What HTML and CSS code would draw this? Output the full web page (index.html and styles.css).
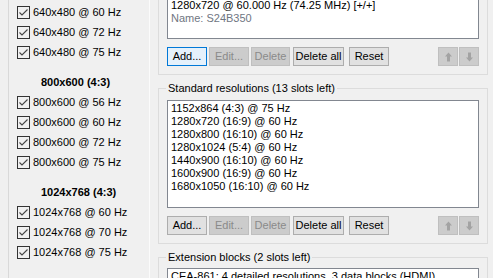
FILE: index.html
```html
<!DOCTYPE html>
<html>
<head>
<meta charset="utf-8">
<link rel="stylesheet" href="styles.css">
</head>
<body>
<div class="app">
  <div class="modes">
    <label class="mode"><span class="cb"><svg viewBox="0 0 11 11" width="11" height="11"><polyline points="1.5,5.5 4,8 9.5,2.5" class="tick"/></svg></span>640x480 @ 60 Hz</label>
    <label class="mode"><span class="cb"><svg viewBox="0 0 11 11" width="11" height="11"><polyline points="1.5,5.5 4,8 9.5,2.5" class="tick"/></svg></span>640x480 @ 72 Hz</label>
    <label class="mode"><span class="cb"><svg viewBox="0 0 11 11" width="11" height="11"><polyline points="1.5,5.5 4,8 9.5,2.5" class="tick"/></svg></span>640x480 @ 75 Hz</label>
    <div class="head">800x600 (4:3)</div>
    <label class="mode"><span class="cb"><svg viewBox="0 0 11 11" width="11" height="11"><polyline points="1.5,5.5 4,8 9.5,2.5" class="tick"/></svg></span>800x600 @ 56 Hz</label>
    <label class="mode"><span class="cb"><svg viewBox="0 0 11 11" width="11" height="11"><polyline points="1.5,5.5 4,8 9.5,2.5" class="tick"/></svg></span>800x600 @ 60 Hz</label>
    <label class="mode"><span class="cb"><svg viewBox="0 0 11 11" width="11" height="11"><polyline points="1.5,5.5 4,8 9.5,2.5" class="tick"/></svg></span>800x600 @ 72 Hz</label>
    <label class="mode"><span class="cb"><svg viewBox="0 0 11 11" width="11" height="11"><polyline points="1.5,5.5 4,8 9.5,2.5" class="tick"/></svg></span>800x600 @ 75 Hz</label>
    <div class="head">1024x768 (4:3)</div>
    <label class="mode"><span class="cb"><svg viewBox="0 0 11 11" width="11" height="11"><polyline points="1.5,5.5 4,8 9.5,2.5" class="tick"/></svg></span>1024x768 @ 60 Hz</label>
    <label class="mode"><span class="cb"><svg viewBox="0 0 11 11" width="11" height="11"><polyline points="1.5,5.5 4,8 9.5,2.5" class="tick"/></svg></span>1024x768 @ 70 Hz</label>
    <label class="mode"><span class="cb"><svg viewBox="0 0 11 11" width="11" height="11"><polyline points="1.5,5.5 4,8 9.5,2.5" class="tick"/></svg></span>1024x768 @ 75 Hz</label>
  </div>
  <div class="main">
    <div class="group first">
      <div class="list top">
        <div>1280x720 @ 60.000 Hz (74.25 MHz) [+/+]</div>
        <div class="dim">Name: S24B350</div>
      </div>
      <div class="btns">
        <button type="button" class="btn def">Add...</button>
        <button type="button" class="btn" disabled>Edit...</button>
        <button type="button" class="btn del" disabled>Delete</button>
        <button type="button" class="btn wide">Delete all</button>
        <button type="button" class="btn reset">Reset</button>
        <div class="arrows">
          <button type="button" class="btn arr" disabled><svg viewBox="0 0 9 10" width="9" height="10"><polygon points="4.5,0.5 8,4.5 6,4.5 6,9.5 3,9.5 3,4.5 1,4.5" class="ai"/></svg></button>
          <button type="button" class="btn arr" disabled><svg viewBox="0 0 9 10" width="9" height="10"><polygon points="3,0.5 6,0.5 6,5.5 8,5.5 4.5,9.5 1,5.5 3,5.5" class="ai"/></svg></button>
        </div>
      </div>
    </div>
    <fieldset class="group">
      <legend>Standard resolutions (13 slots left)</legend>
      <div class="list std">
        <div>1152x864 (4:3) @ 75 Hz</div>
        <div>1280x720 (16:9) @ 60 Hz</div>
        <div>1280x800 (16:10) @ 60 Hz</div>
        <div>1280x1024 (5:4) @ 60 Hz</div>
        <div>1440x900 (16:10) @ 60 Hz</div>
        <div>1600x900 (16:9) @ 60 Hz</div>
        <div>1680x1050 (16:10) @ 60 Hz</div>
      </div>
      <div class="btns">
        <button type="button" class="btn">Add...</button>
        <button type="button" class="btn" disabled>Edit...</button>
        <button type="button" class="btn del" disabled>Delete</button>
        <button type="button" class="btn wide">Delete all</button>
        <button type="button" class="btn reset">Reset</button>
        <div class="arrows">
          <button type="button" class="btn arr" disabled><svg viewBox="0 0 9 10" width="9" height="10"><polygon points="4.5,0.5 8,4.5 6,4.5 6,9.5 3,9.5 3,4.5 1,4.5" class="ai"/></svg></button>
          <button type="button" class="btn arr" disabled><svg viewBox="0 0 9 10" width="9" height="10"><polygon points="3,0.5 6,0.5 6,5.5 8,5.5 4.5,9.5 1,5.5 3,5.5" class="ai"/></svg></button>
        </div>
      </div>
    </fieldset>
    <fieldset class="group ext-group">
      <legend>Extension blocks (2 slots left)</legend>
      <div class="list ext">
        <div>CEA-861: 4 detailed resolutions, 3 data blocks (HDMI)</div>
      </div>
    </fieldset>
  </div>
</div>
</body>
</html>
```
FILE: styles.css
```css
html, body {
  margin: 0;
  height: 100%;
  overflow: hidden;
  background: #f0f0f0;
}
body {
  font: 11px/13px "Liberation Sans", Arial, sans-serif;
  color: #000;
}
.app {
  display: flex;
  gap: 8px;
  padding-left: 8px;
  height: 278px;
}
.modes {
  flex: none;
  width: 140px;
  border-left: 1px solid #d9d9d9;
  border-right: 1px solid #fbfbfb;
  padding-top: 2px;
}
.mode {
  display: flex;
  align-items: center;
  height: 20px;
  padding-left: 8px;
}
.cb {
  flex: none;
  display: flex;
  box-sizing: border-box;
  width: 13px;
  height: 13px;
  border: 1px solid #333;
  margin-right: 3px;
}
.tick {
  fill: none;
  stroke: #444;
  stroke-width: 1.1;
}
.head {
  margin-top: 10px;
  height: 20px;
  line-height: 20px;
  font-weight: bold;
  padding-left: 32px;
}
.main {
  flex: none;
  width: 330px;
  display: flex;
  flex-direction: column;
}
.group {
  border: 1px solid #dcdcdc;
  padding: 0 8px 8px 8px;
  margin: 0;
  min-width: 0;
}
.first {
  border-top: none;
  margin-top: -2px;
}
fieldset.group {
  margin-top: 7px;
  padding-top: 5px;
}
fieldset.ext-group {
  padding-top: 4px;
}
legend {
  padding: 0 2px;
  margin-left: -1px;
  line-height: 13px;
}
.list {
  background: #fff;
  border: 1px solid #828790;
  padding: 0 3px;
  box-sizing: border-box;
  white-space: nowrap;
  overflow: hidden;
}
.top {
  height: 41px;
}
.dim {
  color: #6f7682;
}
.std {
  height: 108px;
  padding-top: 1px;
}
.ext {
  height: 40px;
  padding-top: 1px;
}
.btns {
  display: flex;
  gap: 2px;
  margin-top: 8px;
}
.btn {
  flex: none;
  box-sizing: border-box;
  width: 40px;
  height: 19px;
  padding: 0;
  margin: 0;
  border: 1px solid #adadad;
  border-radius: 0;
  background: #e1e1e1;
  color: #000;
  font: 11px/17px "Liberation Sans", Arial, sans-serif;
  text-align: center;
}
.def {
  border-color: #0078d7;
  background: #e5f1fb;
}
.btn:disabled {
  background: #cccccc;
  border-color: #bfbfbf;
  color: #8a8a8a;
}
.del {
  width: 39px;
}
.wide {
  width: 51px;
  margin-left: 1px;
}
.reset {
  margin-left: 3px;
}
.arrows {
  margin-left: auto;
  display: flex;
  gap: 1px;
}
.arr {
  width: 20px;
  display: flex;
  align-items: center;
  justify-content: center;
}
.ai {
  fill: #a3a3a3;
}
```
